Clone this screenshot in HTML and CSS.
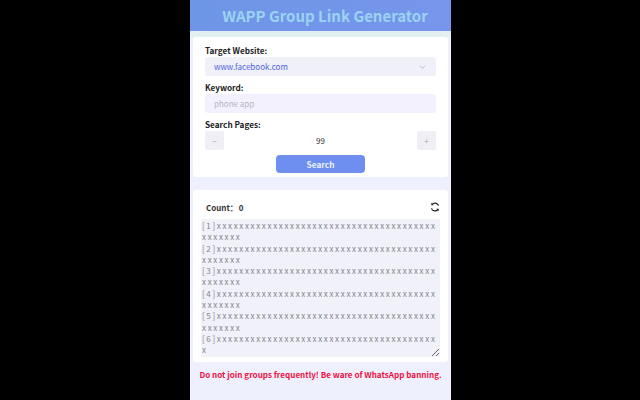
FILE: index.html
```
<!DOCTYPE html>
<html lang="en">
<head>
<meta charset="utf-8">
<title>WAPP Group Link Generator</title>
<link rel="stylesheet" href="styles.css">
</head>
<body>
<main class="app">
  <header class="header"><h1>WAPP Group Link Generator</h1></header>
  <section class="card form">
    <label class="label">Target Website:</label>
    <div class="field select"><span>www.facebook.com</span>
      <svg class="chev" viewBox="0 0 10 6" width="7" height="4"><path d="M1 1l4 4 4-4" fill="none" stroke="#b9bac4" stroke-width="1.4"/></svg>
    </div>
    <label class="label">Keyword:</label>
    <div class="field keyword">phone app</div>
    <label class="label">Search Pages:</label>
    <div class="stepper">
      <span class="step">−</span>
      <span class="num">99</span>
      <span class="step">+</span>
    </div>
    <button class="search">Search</button>
  </section>
  <section class="card results">
    <div class="count-row">
      <span class="count">Count：<span class="zero">0</span></span>
      <svg class="refresh" viewBox="0 0 12 12" width="10" height="10"><path d="M10.3 4.4A4.6 4.6 0 0 0 2.4 3M1.7 7.6A4.6 4.6 0 0 0 9.6 9" fill="none" stroke="#222" stroke-width="1.5"/><path d="M1.6 .8v3h3zM10.4 11.2v-3h-3z" fill="#222"/></svg>
    </div>
    <textarea class="list" readonly>[1]xxxxxxxxxxxxxxxxxxxxxxxxxxxxxxxxxxxxxxxxxxxxxx
[2]xxxxxxxxxxxxxxxxxxxxxxxxxxxxxxxxxxxxxxxxxxxxxx
[3]xxxxxxxxxxxxxxxxxxxxxxxxxxxxxxxxxxxxxxxxxxxxxx
[4]xxxxxxxxxxxxxxxxxxxxxxxxxxxxxxxxxxxxxxxxxxxxxx
[5]xxxxxxxxxxxxxxxxxxxxxxxxxxxxxxxxxxxxxxxxxxxxxx
[6]xxxxxxxxxxxxxxxxxxxxxxxxxxxxxxxxxxxxxxxx</textarea>
  </section>
  <p class="warn">Do not join groups frequently! Be ware of WhatsApp banning.</p>
</main>
</body>
</html>
```
FILE: styles.css
```
* { box-sizing: border-box; }
html, body { margin: 0; height: 100%; background: #000; }
body { display: flex; justify-content: center; font-family: "Noto Sans CJK SC", sans-serif; overflow: hidden; }
.app { width: 261px; height: 400px; margin-left: 1px; background: #eef0fd; padding: 0 3px; display: flex; flex-direction: column; }
.header { margin: 0 -3px; height: 37px; border-bottom: 6px solid #e2eff3; background: linear-gradient(90deg, #6e96e6, #7795ec) padding-box; display: flex; align-items: center; justify-content: center; padding-left: 9px; }
.header h1 { margin: 0; font-size: 15px; font-weight: 700; line-height: 31px; color: #9bd3f2; }
.card { background: #fff; border-radius: 3px; }
.form { height: 140px; padding: 6px 12px 0; display: flex; flex-direction: column; }
.label { font-size: 8.2px; font-weight: 700; line-height: 14px; color: #222; height: 14px; }
.field { flex: none; height: 19px; margin: 0 0 4px; border-radius: 3px; background: #f0f0f9; font-size: 8px; display: flex; align-items: center; justify-content: space-between; padding: 0 9px; }
.select { color: #4a63e0; }
.keyword { background: #f3f1fd; color: #b5b5bf; }
.chev { margin-right: 1px; }
.stepper { flex: none; display: flex; align-items: center; height: 19px; }
.step { width: 19px; height: 19px; border-radius: 2px; background: #efeff5; color: #aaa; font-size: 8px; display: flex; align-items: center; justify-content: center; }
.num { flex: 1; text-align: center; font-size: 8px; color: #333; }
.search { flex: none; align-self: center; width: 89px; height: 18px; margin-top: 5px; border: 0; border-radius: 4px; background: #6e8ff0; color: #e6f2ff; font: 700 8.3px "Noto Sans CJK SC", sans-serif; padding: 0; }
.results { margin-top: 13px; height: 172px; padding: 0 8px; display: flex; flex-direction: column; }
.count-row { height: 29px; display: flex; align-items: center; justify-content: space-between; padding: 5px 0 0 5px; flex: none; }
.count { font-size: 8px; font-weight: 700; color: #333; }
.zero { margin-left: 1px; }
.list { flex: none; width: 100%; height: 138px; border: 0; outline: 0; resize: both; background: #f1f1f9; padding: 1px 0 0 1px; font: 8px/11.3px "Noto Sans CJK SC", sans-serif; letter-spacing: 1.65px; color: #85858f; overflow: hidden; word-break: break-all; }
.warn { margin: 6px 0 0; text-align: center; font-size: 8.1px; font-weight: 700; line-height: 13px; color: #ee1144; white-space: nowrap; }
```
